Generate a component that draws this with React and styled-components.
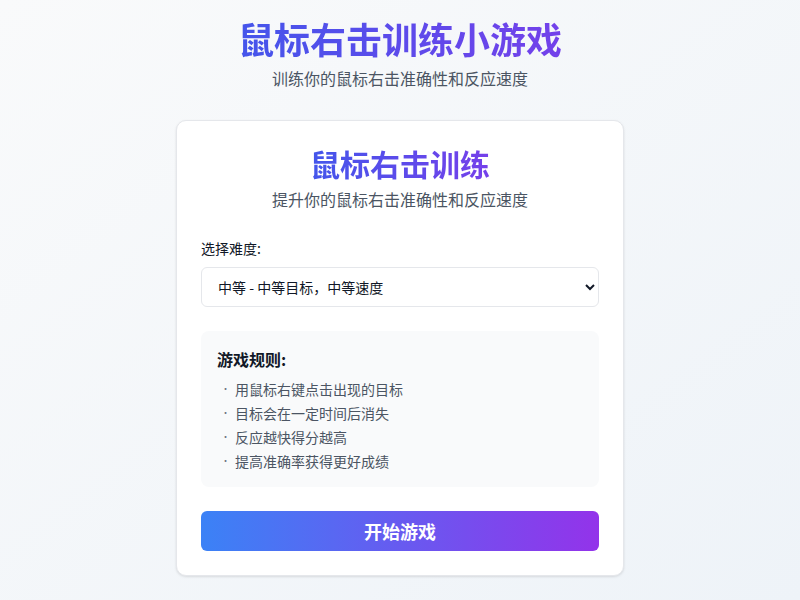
import React from "react";
import styled, { createGlobalStyle } from "styled-components";

const GlobalStyle = createGlobalStyle`
  * {
    box-sizing: border-box;
  }
  body {
    margin: 0;
    font-family: "Noto Sans CJK SC", "Noto Sans", sans-serif;
    color: #111827;
  }
`;

const rules = [
  "用鼠标右键点击出现的目标",
  "目标会在一定时间后消失",
  "反应越快得分越高",
  "提高准确率获得更好成绩",
];

function App() {
  return (
    <Page>
      <GlobalStyle />
      <Header>
        <Title>鼠标右击训练小游戏</Title>
        <Subtitle>训练你的鼠标右击准确性和反应速度</Subtitle>
      </Header>
      <Card>
        <CardTitle>鼠标右击训练</CardTitle>
        <CardSubtitle>提升你的鼠标右击准确性和反应速度</CardSubtitle>

        <Label htmlFor="difficulty">选择难度:</Label>
        <Select id="difficulty" defaultValue="medium">
          <option value="easy">简单 - 大目标，慢速度</option>
          <option value="medium">中等 - 中等目标，中等速度</option>
          <option value="hard">困难 - 小目标，快速度</option>
        </Select>

        <RulesBox>
          <RulesTitle>游戏规则:</RulesTitle>
          <RulesList>
            {rules.map((rule) => (
              <RuleItem key={rule}>
                <Bullet>•</Bullet>
                {rule}
              </RuleItem>
            ))}
          </RulesList>
        </RulesBox>

        <StartButton>开始游戏</StartButton>
      </Card>
    </Page>
  );
}

export default App;

const Page = styled.div`
  min-height: 100vh;
  padding: 18px 16px 24px;
  background: linear-gradient(to bottom right, #f9fafb, #eef3f8);
  display: flex;
  flex-direction: column;
  align-items: center;
`;

const Header = styled.header`
  width: 100%;
  text-align: center;
  margin-bottom: 30px;
`;

const Title = styled.h1`
  margin: 0 0 8px;
  font-size: 36px;
  line-height: 40px;
  font-weight: 700;
  background: linear-gradient(to right, #2563eb, #9333ea);
  -webkit-background-clip: text;
  background-clip: text;
  color: transparent;
`;

const Subtitle = styled.p`
  margin: 0;
  font-size: 16px;
  line-height: 24px;
  color: #4b5563;
`;

const Card = styled.div`
  width: 448px;
  background: #ffffff;
  border: 1px solid #e5e7eb;
  border-radius: 10px;
  box-shadow: 0 1px 3px rgba(0, 0, 0, 0.08), 0 1px 2px rgba(0, 0, 0, 0.04);
  padding: 24px;
`;

const CardTitle = styled.h2`
  margin: 0 0 8px;
  text-align: center;
  font-size: 30px;
  line-height: 36px;
  font-weight: 700;
  background: linear-gradient(to right, #2563eb, #9333ea);
  -webkit-background-clip: text;
  background-clip: text;
  color: transparent;
`;

const CardSubtitle = styled.p`
  margin: -2px 0 27px;
  text-align: center;
  font-size: 16px;
  line-height: 24px;
  color: #4b5563;
`;

const Label = styled.label`
  display: block;
  font-size: 14px;
  line-height: 20px;
  margin-bottom: 9px;
  color: #111827;
`;

const Select = styled.select`
  display: block;
  width: 100%;
  height: 40px;
  padding: 0 10px 0 12px;
  font-family: inherit;
  font-size: 14px;
  color: #111827;
  background: #ffffff;
  border: 1px solid #e5e7eb;
  border-radius: 6px;
  margin-bottom: 24px;
  outline: none;
`;

const RulesBox = styled.div`
  background: #f9fafb;
  border-radius: 8px;
  padding: 16px;
  margin-bottom: 24px;
`;

const RulesTitle = styled.h3`
  margin: 0 0 8px;
  font-size: 16px;
  line-height: 24px;
  font-weight: 700;
  color: #111827;
`;

const RulesList = styled.ul`
  list-style: none;
  margin: 0;
  padding: 0;
  display: flex;
  flex-direction: column;
  gap: 4px;
`;

const RuleItem = styled.li`
  display: flex;
  align-items: center;
  font-size: 14px;
  line-height: 20px;
  color: #4b5563;
`;

const Bullet = styled.span`
  width: 18px;
  padding-left: 4px;
  font-size: 9px;
  color: #6b7280;
`;

const StartButton = styled.button`
  display: block;
  width: 100%;
  height: 40px;
  border: none;
  border-radius: 6px;
  background: linear-gradient(to right, #3b82f6, #9333ea);
  color: #ffffff;
  font-family: inherit;
  font-size: 18px;
  font-weight: 700;
  cursor: pointer;
`;
